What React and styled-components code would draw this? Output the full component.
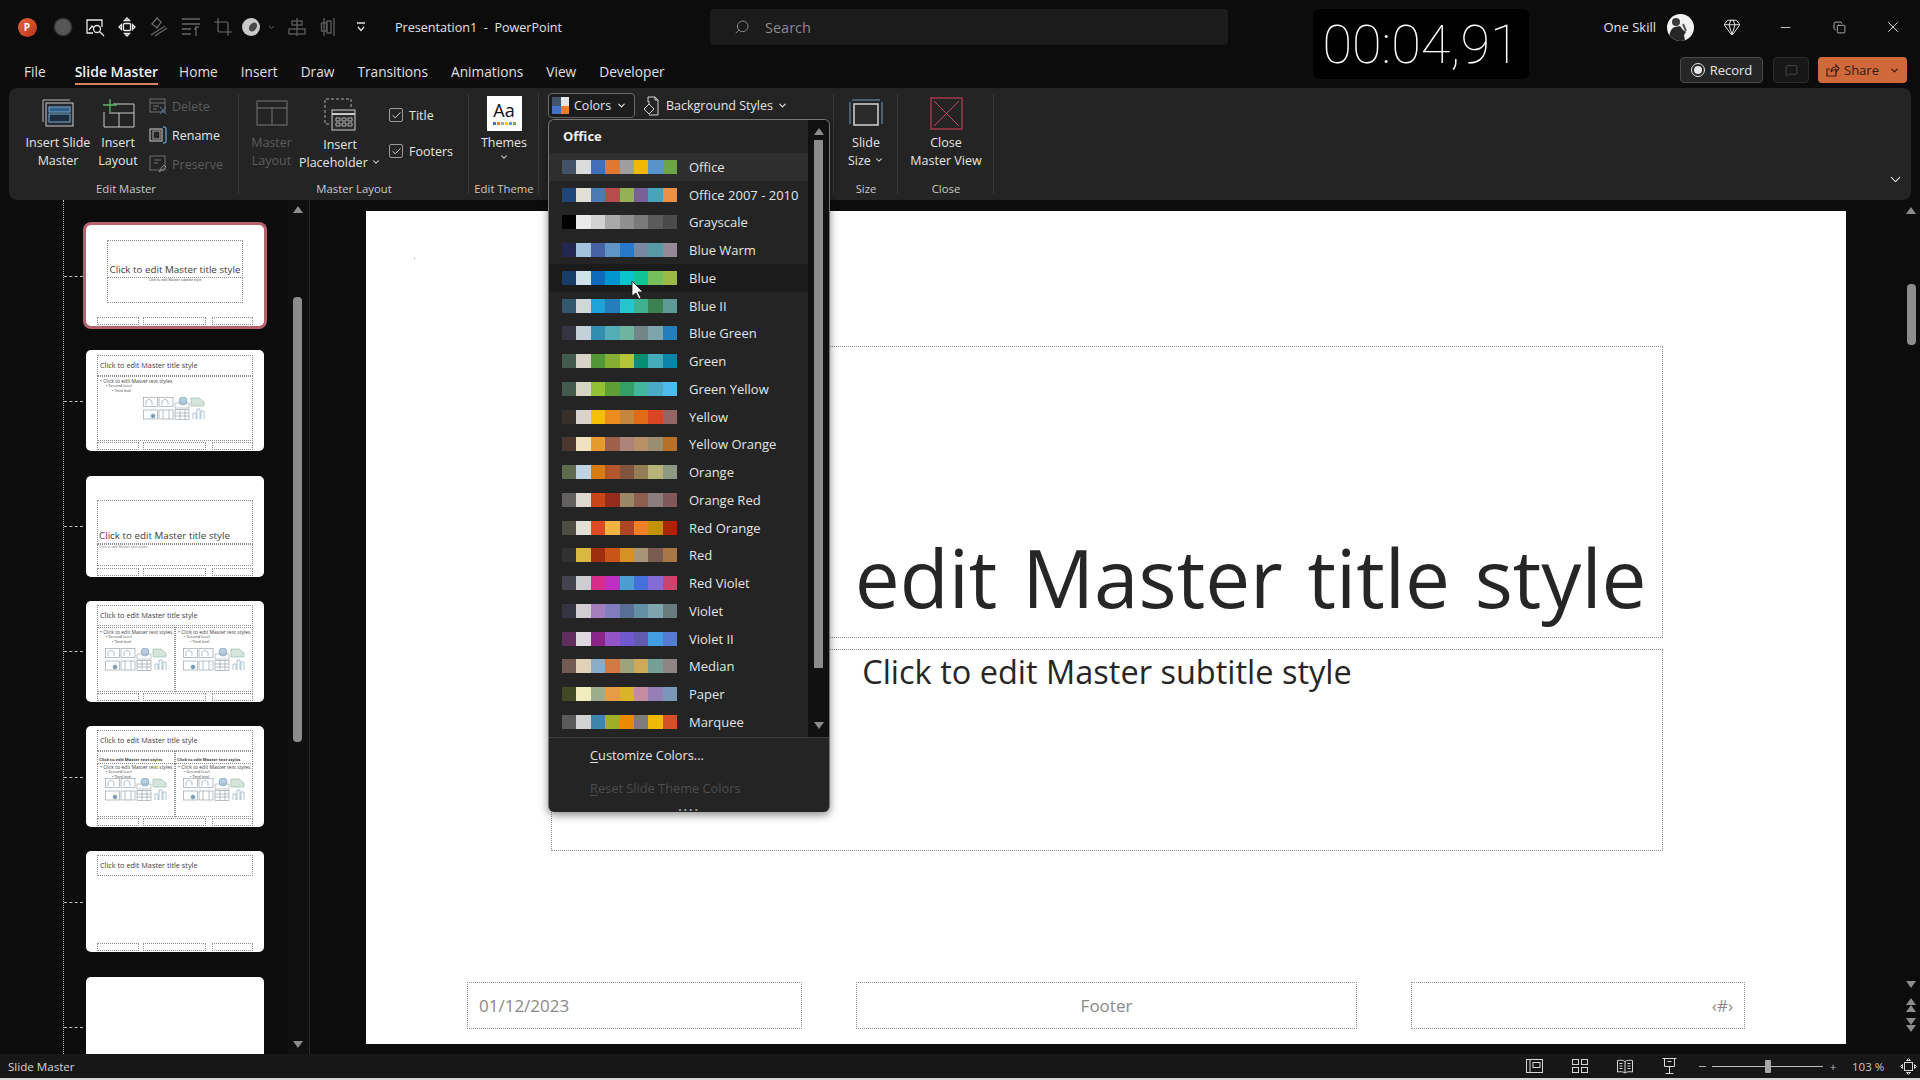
import styled, { createGlobalStyle } from "styled-components";
import { Search, ChevronDown, Minus, X, Gem, Crop, Check, Copy, MessageSquare } from "lucide-react";

const GlobalStyle = createGlobalStyle`
	html, body {
		margin: 0;
		padding: 0;
		width: 1920px;
		height: 1080px;
		overflow: hidden;
		background: #0c0c0c;
		font-family: "Open Sans", "Noto Sans", sans-serif;
		color: #e6e6e6;
	}
	* { box-sizing: border-box; }
`;

const SCHEMES = [
	["Office", "44546a e7e6e6 4472c4 ed7d31 a5a5a5 ffc000 5b9bd5 70ad47"],
	["Office 2007 - 2010", "1f497d eeece1 4f81bd c0504d 9bbb59 8064a2 4bacc6 f79646"],
	["Grayscale", "000000 f8f8f8 dddddd b2b2b2 969696 808080 5f5f5f 4d4d4d"],
	["Blue Warm", "242852 acccea 4a66ac 629dd1 297fd5 7f8fa9 5aa2ae 9d90a0"],
	["Blue", "17406d dbeff9 0f6fc6 009dd9 0bd0d9 10cf9b 7cca62 a5c249"],
	["Blue II", "335b74 dfe3e5 1cade4 2683c6 27ced7 42ba97 3e8853 62a39f"],
	["Blue Green", "373545 cedbe6 3494ba 58b6c0 75bda7 7a8c8e 84acb6 2683c6"],
	["Green", "455f51 e3ded1 549e39 8ab833 c0cf3a 029676 4ab5c4 0989b1"],
	["Green Yellow", "455f51 e2dfcc 99cb38 63a537 37a76f 44c1a3 4eb3cf 51c3f9"],
	["Yellow", "39302a e5dedb ffca08 f8931d ce8d3e ec7016 e64823 9c6a6a"],
	["Yellow Orange", "4e3b30 fbeec9 f0a22e a5644e b58b80 c3986d a19574 c17529"],
	["Orange", "637052 ccddea e48312 bd582c 865640 9b8357 c2bc80 94a088"],
	["Orange Red", "696464 e9e5dc d34817 9b2d1f a28e6a 956251 918485 855d5d"],
	["Red Orange", "505046 eeece1 e84c22 ffbd47 b64926 ff8427 cc9900 b22600"],
	["Red", "323232 e5c243 a5300f d55816 e19825 b19c7d 7f5f52 b27d49"],
	["Red Violet", "454551 d8d9dc e32d91 c830cc 4ea6dc 4775e7 8971e1 d54773"],
	["Violet", "373545 dcd8dc ad84c6 8784c7 5d739a 6997af 84acb6 6f8183"],
	["Violet II", "632e62 eae5eb 92278f 9b57d3 755dd9 665eb8 45a5ed 5982db"],
	["Median", "775f55 ebddc3 94b6d2 dd8047 a5ab81 d8b25c 7ba79d 968c8c"],
	["Paper", "444d26 fefac9 a5b592 f3a447 e7bc29 d092a7 9c85c0 809ec2"],
	["Marquee", "5e5e5e dddddd 418ab3 a6b727 f69200 838383 fec306 df5327"],
];

const TABS = ["Home", "Insert", "Draw", "Transitions", "Animations", "View", "Developer"];
const THEME_DOTS = ["#4472c4", "#ed7d31", "#a5a5a5", "#ffc000", "#5b9bd5", "#70ad47"];

// ---------- drawings ----------

const SlideMasterIcon = () => (
	<svg width="32" height="28" viewBox="0 0 32 28" fill="none">
		<path d="M1 23V1h27" stroke="#b8b8b8" />
		<rect x="4" y="4" width="27" height="23" stroke="#c9c9c9" fill="#262c33" />
		<rect x="7" y="8" width="21" height="5" fill="#2f5f88" stroke="#78a9d0" />
		<rect x="7" y="15" width="21" height="8" fill="#1c2e3e" stroke="#78a9d0" />
	</svg>
);

const LayoutIcon = () => (
	<svg width="34" height="30" viewBox="0 0 34 30" fill="none">
		<path d="M12 6h21v23H3V14" stroke="#c9c9c9" />
		<path d="M8 15h25M18 15v14" stroke="#c9c9c9" />
		<path d="M9 1v13M2 7h14" stroke="#62b36a" strokeWidth="1.3" />
	</svg>
);

const MasterLayoutIcon = () => (
	<svg width="32" height="26" viewBox="0 0 32 26" fill="none" stroke="#767676">
		<rect x="1" y="1" width="30" height="24" />
		<path d="M1 8h30M16 8v17" />
	</svg>
);

const PlaceholderIcon = () => (
	<svg width="32" height="33" viewBox="0 0 32 33" fill="none">
		<path d="M5 26H1V1h26v10" stroke="#a8a8a8" strokeDasharray="3 2" />
		<rect x="8" y="12" width="23" height="20" stroke="#c9c9c9" fill="#2c2c2c" />
		<path d="M8 16h23" stroke="#c9c9c9" strokeWidth="2" />
		<path d="M12 20h4v3h-4zM18 20h4v3h-4zM24 20h4v3h-4zM12 25h4v3h-4zM18 25h4v3h-4zM24 25h4v3h-4z" stroke="#b0b0b0" />
	</svg>
);

const DeleteIcon = () => (
	<svg width="18" height="17" viewBox="0 0 18 17" fill="none" stroke="#6e6e6e">
		<rect x="1" y="1" width="15" height="13" />
		<path d="M1 5h15M4 8h6M4 11h4" />
		<path d="M11 9l6 7M17 9l-6 7" stroke="#5c7e99" />
	</svg>
);

const RenameIcon = () => (
	<svg width="18" height="18" viewBox="0 0 18 18" fill="none">
		<rect x="1" y="3" width="12" height="12" stroke="#d0d0d0" />
		<rect x="4" y="5" width="7" height="8" stroke="#a8a8a8" />
		<path d="M14 1c2 0 3 0 3 2v12c0 2-1 2-3 2" stroke="#5fa4d8" strokeWidth="1.3" />
	</svg>
);

const PreserveIcon = () => (
	<svg width="18" height="18" viewBox="0 0 18 18" fill="none" stroke="#6e6e6e">
		<rect x="1" y="1" width="15" height="14" />
		<path d="M5 5h7M5 8h4" />
		<path d="M10 17l3-5 2-2 2 2-2 2-5 3z" stroke="#8c8c8c" />
	</svg>
);

const BackgroundIcon = () => (
	<svg width="16" height="20" viewBox="0 0 16 20" fill="none" stroke="#d4d4d4">
		<path d="M5 6V1h7l3 3v15H6" />
		<path d="M12 1v3h3" />
		<path d="M1 13l5-5 5 5-5 5-5-5zM6 8V5" />
	</svg>
);

const SlideSizeIcon = () => (
	<svg width="34" height="28" viewBox="0 0 34 28" fill="none">
		<path d="M3 1h28" stroke="#6a9cc5" />
		<path d="M1 3v22M33 3v22" stroke="#6a9cc5" />
		<rect x="5" y="5" width="24" height="21" stroke="#c9c9c9" strokeWidth="1.6" fill="#2a2a2a" />
	</svg>
);

const CloseMasterIcon = () => (
	<svg width="33" height="33" viewBox="0 0 33 33" fill="none">
		<rect x="1" y="1" width="31" height="31" stroke="#a83c52" strokeWidth="1.4" />
		<path d="M4 4l25 25M29 4L4 29" stroke="#bc4a60" />
	</svg>
);

const PictureSearchIcon = () => (
	<svg width="19" height="19" viewBox="0 0 19 19" fill="none" stroke="#e8e8e8" strokeWidth="1.3">
		<path d="M7 15H1V2h15v7" />
		<path d="M3 12l3-4 2 2" />
		<circle cx="11" cy="11" r="3.5" />
		<path d="M13.5 13.5L18 18" />
	</svg>
);

const MoveIcon = () => (
	<svg width="18" height="20" viewBox="0 0 18 20" fill="none" stroke="#e8e8e8" strokeWidth="1.3">
		<rect x="5.5" y="6.5" width="7" height="7" rx="1" />
		<path d="M9 1L6.5 3.5h5L9 1zM9 19l-2.5-2.5h5L9 19zM1 10l2.5-2.5v5L1 10zM17 10l-2.5-2.5v5L17 10z" />
	</svg>
);

const BrushIcon = () => (
	<svg width="20" height="20" viewBox="0 0 20 20" fill="none" stroke="#6a6a6a" strokeWidth="1.3">
		<path d="M8 1L3 7l5 4 4-6-4-4zM2 18l14-9M6 19l12-8" />
	</svg>
);

const ParagraphIcon = () => (
	<svg width="20" height="20" viewBox="0 0 20 20" fill="none" stroke="#666" strokeWidth="1.3">
		<path d="M1 2h18M1 7h18M1 12h9M1 17h9M15 19v-9h3M13 12h2" />
	</svg>
);

const BlobIcon = () => (
	<svg width="20" height="20" viewBox="0 0 20 20">
		<path d="M10 1a9 9 0 1 0 0 18 9 9 0 0 0 0-18z" fill="#c9c9c9" />
		<ellipse cx="12" cy="10" rx="3.5" ry="5" transform="rotate(35 12 10)" fill="#4a4a4a" />
	</svg>
);

const AlignIcon = () => (
	<svg width="18" height="20" viewBox="0 0 18 20" fill="none" stroke="#5e5e5e" strokeWidth="1.3">
		<path d="M9 1v18" />
		<rect x="4" y="4" width="10" height="4" />
		<rect x="1" y="12" width="16" height="5" />
	</svg>
);

const DistributeIcon = () => (
	<svg width="18" height="20" viewBox="0 0 18 20" fill="none" stroke="#5e5e5e" strokeWidth="1.3">
		<path d="M4 1v18M14 1v18" />
		<rect x="1.5" y="6" width="5" height="8" />
		<rect x="7" y="4" width="4" height="12" />
	</svg>
);

const OverflowIcon = () => (
	<svg width="10" height="11" viewBox="0 0 10 11" fill="none" stroke="#e0e0e0" strokeWidth="1.3">
		<path d="M1 1h8M2 5l3 3.5L8 5" />
	</svg>
);

const ShareIcon = () => (
	<svg width="14" height="14" viewBox="0 0 14 14" fill="none" stroke="#3b2016" strokeWidth="1.2">
		<path d="M10 7v6H1V6h3" />
		<path d="M5 9c0-3 2-5 5-5V2l3 3.5L10 9V6.5C8 6.5 6 7 5 9z" />
	</svg>
);

const AvatarPhoto = () => (
	<svg width="27" height="27" viewBox="0 0 27 27">
		<rect width="27" height="27" fill="#f2f2f2" />
		<circle cx="9" cy="8" r="4" fill="#3a3a3a" />
		<path d="M2 27c0-8 2-13 6-14l5-1 3 4 3 2-2 3 1 6z" fill="#262626" />
		<path d="M16 10l3 7" stroke="#555" strokeWidth="2" />
	</svg>
);

const NormalViewIcon = () => (
	<svg width="17" height="14" viewBox="0 0 17 14" fill="none" stroke="#d8d8d8">
		<rect x="0.5" y="0.5" width="16" height="13" />
		<path d="M4 .5v13" />
		<rect x="7" y="3.5" width="7" height="5" />
	</svg>
);

const SorterIcon = () => (
	<svg width="16" height="14" viewBox="0 0 16 14" fill="none" stroke="#d8d8d8">
		<rect x="0.5" y="0.5" width="6" height="5" />
		<rect x="9.5" y="0.5" width="6" height="5" />
		<rect x="0.5" y="8.5" width="6" height="5" />
		<rect x="9.5" y="8.5" width="6" height="5" />
	</svg>
);

const ReadingIcon = () => (
	<svg width="16" height="15" viewBox="0 0 16 15" fill="none" stroke="#d8d8d8">
		<path d="M8 2.5C6 1 3 1 .5 1.500V13C3 12.500 6 12.500 8 14c2-1.500 5-1.500 7.500-1V1.500C13 1 10 1 8 2.500zM8 2.500V14M2.500 4.500h3M2.500 7h3M2.500 9.500h3M10.500 4.500h3M10.500 7h3M10.500 9.500h3" />
	</svg>
);

const ShowIcon = () => (
	<svg width="15" height="16" viewBox="0 0 15 16" fill="none" stroke="#d8d8d8">
		<path d="M.5.500h14M2.500.500v8h10v-8M7.500 8.500V15M3.500 15.500h8M5.500 3.500h4" />
	</svg>
);

const FitIcon = () => (
	<svg width="17" height="17" viewBox="0 0 17 17" fill="none" stroke="#d8d8d8">
		<rect x="4.500" y="4.500" width="8" height="8" />
		<path d="M8.500.5L6.500 2.500h4L8.500.5zM8.500 16.500l-2-2h4l-2 2zM.5 8.500l2-2v4l-2-2zM16.500 8.500l-2-2v4l2-2z" />
	</svg>
);

const ContentIcons = () => (
	<svg width="62" height="23" viewBox="0 0 62 23" fill="none" stroke="#8b96a0" strokeWidth="0.6">
		<rect x="0.5" y="0.5" width="14" height="9" />
		<path d="M3 8V4l3-2 3 2v4" />
		<rect x="16" y="0.5" width="14" height="9" />
		<path d="M19 8V4l3-2 3 2v4" />
		<circle cx="40" cy="4" r="4" stroke="#6f9dc4" fill="#b7cde0" />
		<path d="M32 6h14v5H32z" stroke="#9aa6b0" />
		<path d="M48 1h8l5 4v4H48z" stroke="#8fb5a2" fill="#d5e5dc" />
		<rect x="0.5" y="13" width="14" height="9" />
		<circle cx="10" cy="19" r="2" fill="#6f9dc4" />
		<rect x="16" y="13" width="14" height="9" />
		<path d="M20 13v9M26 13v9" />
		<rect x="32" y="12.500" width="14" height="10" />
		<path d="M32 16h14M32 19h14M37 12.500v10M42 12.500v10" />
		<path d="M50 22v-6h3v6M54 22V12h3v10M58 22v-8h3v8" stroke="#7b9fbd" />
	</svg>
);

// ---------- page frame ----------

const Page = styled.div`
	position: relative;
	width: 1920px;
	height: 1080px;
	display: flex;
	flex-direction: column;
	background: #0c0c0c;
	overflow: hidden;
`;

const TitleBar = styled.div`
	height: 56px;
	flex: none;
	display: flex;
	align-items: center;
	padding: 0 0 2px 12px;
`;

const QuickSlot = styled.div`
	width: ${(p) => p.$w || 32}px;
	margin-left: ${(p) => p.$ml || 0}px;
	height: 30px;
	display: flex;
	align-items: center;
	justify-content: center;
	color: ${(p) => p.$color || "#e8e8e8"};
`;

const AppLogo = styled.div`
	width: 19px;
	height: 19px;
	border-radius: 50%;
	background: linear-gradient(135deg, #e8653a, #b9341a);
	display: flex;
	align-items: center;
	justify-content: center;
	font-size: 10px;
	font-weight: 700;
	color: #fff;
`;

const RecordDot = styled.div`
	width: 16px;
	height: 16px;
	border-radius: 50%;
	background: #565656;
	box-shadow: 0 0 0 1.5px #2e2e2e;
`;

const WindowTitle = styled.div`
	width: 315px;
	margin-left: 18px;
	font-size: 12.6px;
	white-space: pre;
	color: #e2e2e2;
`;

const SearchBox = styled.div`
	width: 518px;
	height: 36px;
	background: #1b1b1b;
	border-radius: 4px;
	display: flex;
	align-items: center;
	padding-left: 24px;
	gap: 15px;
	font-size: 14.5px;
	color: #8a8a8a;
	svg { transform: scaleX(-1); }
`;

const TitleRight = styled.div`
	margin-left: auto;
	display: flex;
	align-items: center;
`;

const UserName = styled.div`
	font-size: 13px;
	margin-right: 11px;
	color: #e2e2e2;
`;

const Avatar = styled.div`
	width: 27px;
	height: 27px;
	border-radius: 50%;
	overflow: hidden;
	margin-right: 23px;
`;

const PremiumSlot = styled.div`
	width: 30px;
	margin-right: 11px;
	display: flex;
	justify-content: center;
`;

const WindowButton = styled.div`
	width: 54px;
	height: 30px;
	display: flex;
	align-items: center;
	justify-content: center;
	color: #e8e8e8;
`;

const Timer = styled.div`
	position: absolute;
	left: 1313px;
	top: 9px;
	width: 216px;
	height: 70px;
	background: #000;
	border-radius: 6px;
	display: flex;
	align-items: center;
	justify-content: center;
	font-family: Roboto, sans-serif;
	font-weight: 100;
	font-size: 54px;
	color: #fff;
`;

const TabRow = styled.div`
	height: 32px;
	flex: none;
	display: flex;
	align-items: center;
	padding: 0 13px 0 24px;
`;

const Tab = styled.div`
	position: relative;
	margin-right: ${(p) => p.$mr || 23}px;
	font-size: ${(p) => (p.$active ? 14 : 13.7)}px;
	line-height: 32px;
	font-weight: ${(p) => (p.$active ? 600 : 400)};
	color: ${(p) => (p.$active ? "#f2f2f2" : "#e0e0e0")};
	&::after {
		content: "";
		display: ${(p) => (p.$active ? "block" : "none")};
		position: absolute;
		left: 0;
		right: 0;
		bottom: 3px;
		height: 2px;
		background: #d9825f;
	}
`;

const TabActions = styled.div`
	margin-left: auto;
	margin-bottom: 4px;
	display: flex;
	align-items: center;
`;

const RecordButton = styled.div`
	width: 83px;
	height: 26px;
	border: 1px solid #4a4a4a;
	border-radius: 4px;
	background: #262626;
	display: flex;
	align-items: center;
	justify-content: center;
	gap: 5px;
	font-size: 13px;
	color: #e6e6e6;
`;

const RecordGlyph = styled.span`
	width: 14px;
	height: 14px;
	border-radius: 50%;
	border: 1px solid #e6e6e6;
	display: flex;
	align-items: center;
	justify-content: center;
	&::after {
		content: "";
		width: 8px;
		height: 8px;
		border-radius: 50%;
		background: #e6e6e6;
	}
`;

const CommentButton = styled.div`
	width: 36px;
	height: 26px;
	margin-left: 10px;
	border: 1px solid #2b2b2b;
	border-radius: 4px;
	background: #171717;
	display: flex;
	align-items: center;
	justify-content: center;
	color: #5c5c5c;
`;

const ShareButton = styled.div`
	width: 89px;
	height: 26px;
	margin-left: 9px;
	border-radius: 4px;
	background: #d0683a;
	display: flex;
	align-items: center;
	padding-left: 8px;
	gap: 4px;
	font-size: 13px;
	color: #2e1a12;
	svg:last-child { margin-left: 6px; }
`;

// ---------- ribbon ----------

const Ribbon = styled.div`
	height: 112px;
	flex: none;
	margin: 0 9px;
	background: #242424;
	border-radius: 8px;
	display: flex;
`;

const Group = styled.div`
	position: relative;
	width: ${(p) => p.$w}px;
	display: flex;
	flex-direction: column;
	&::after {
		content: "";
		position: absolute;
		right: 0;
		top: 6px;
		bottom: 6px;
		width: 1px;
		background: #383838;
	}
`;

const GroupBody = styled.div`
	height: 93px;
	padding-top: 4px;
	display: flex;
	justify-content: ${(p) => (p.$center ? "center" : "flex-start")};
`;

const GroupLabel = styled.div`
	font-size: 11.3px;
	line-height: 16px;
	text-align: center;
	color: #c8c8c8;
	padding-left: ${(p) => p.$pl || 0}px;
`;

const BigButton = styled.div`
	width: ${(p) => p.$w}px;
	margin-left: ${(p) => p.$ml || 0}px;
	display: flex;
	flex-direction: column;
	align-items: center;
	font-size: 12.5px;
	line-height: 18px;
	text-align: center;
	white-space: nowrap;
	color: ${(p) => (p.$off ? "#5c5c5c" : "#e4e4e4")};
`;

const IconArea = styled.div`
	height: ${(p) => p.$h || 42}px;
	display: flex;
	align-items: center;
	justify-content: center;
`;

const SmallColumn = styled.div`
	margin-left: ${(p) => p.$ml || 0}px;
	display: flex;
	flex-direction: column;
	gap: 9px;
	padding-top: 4px;
`;

const SmallButton = styled.div`
	height: 20px;
	display: flex;
	align-items: center;
	gap: 5px;
	font-size: 12.5px;
	color: ${(p) => (p.$off ? "#5c5c5c" : "#e4e4e4")};
`;

const CheckColumn = styled.div`
	margin-left: ${(p) => p.$ml || 0}px;
	display: flex;
	flex-direction: column;
	gap: 20px;
	padding-top: 15px;
`;

const CheckRow = styled.label`
	height: 16px;
	display: flex;
	align-items: center;
	gap: 6px;
	font-size: 12.5px;
	color: #e4e4e4;
`;

const CheckBox = styled.span`
	width: 14px;
	height: 14px;
	border: 1px solid #9a9a9a;
	border-radius: 2px;
	display: flex;
	align-items: center;
	justify-content: center;
`;

const ThemeCard = styled.div`
	width: 35px;
	height: 35px;
	background: #fff;
	color: #111;
	display: flex;
	flex-direction: column;
	align-items: center;
	font-size: 18px;
	line-height: 24px;
	padding-top: 2px;
`;

const ThemeDots = styled.div`
	display: flex;
	gap: 1px;
`;

const ThemeDot = styled.span`
	width: 3px;
	height: 3px;
	background: ${(p) => p.$color};
`;

const ColorsButton = styled.div`
	width: 87px;
	height: 25px;
	margin: 1px 8px 0 9px;
	border: 1px solid #6a6a6a;
	border-radius: 4px;
	background: #1c1c1c;
	display: flex;
	align-items: center;
	padding-left: 3px;
	gap: 5px;
	font-size: 12.5px;
	color: #e4e4e4;
`;

const ColorsGlyph = styled.div`
	width: 17px;
	height: 17px;
	display: grid;
	grid-template-columns: 1fr 1fr;
	grid-template-rows: 1fr 1fr;
	span:nth-child(1) { background: #44546a; }
	span:nth-child(2) { background: #e7e6e6; }
	span:nth-child(3) { background: #4472c4; }
	span:nth-child(4) { background: #ed7d31; }
`;

const BackgroundButton = styled.div`
	height: 25px;
	margin-top: 1px;
	display: flex;
	align-items: center;
	gap: 7px;
	font-size: 12.5px;
	color: #e4e4e4;
	svg:last-child { margin-left: -3px; }
`;

const CollapseSlot = styled.div`
	margin-left: auto;
	align-self: flex-end;
	padding: 0 7px 7px 0;
	color: #e0e0e0;
`;

// ---------- theme colours menu ----------

const Menu = styled.div`
	position: absolute;
	left: 548px;
	top: 119px;
	width: 282px;
	height: 693px;
	background: #242424;
	border: 1px solid #777;
	border-width: 1px 1px 0 1px;
	border-radius: 6px;
	box-shadow: 0 3px 8px rgba(0, 0, 0, 0.45);
	display: flex;
	flex-direction: column;
	overflow: hidden;
`;

const MenuTop = styled.div`
	height: 617px;
	flex: none;
	display: flex;
`;

const MenuList = styled.div`
	width: 259px;
`;

const MenuHeader = styled.div`
	height: 33px;
	padding: 7px 0 0 14px;
	font-size: 13px;
	font-weight: 700;
	color: #f0f0f0;
`;

const SchemeRow = styled.div`
	height: 27.75px;
	display: flex;
	align-items: center;
	padding-left: 13px;
	font-size: 13px;
	color: #e4e4e4;
	background: ${(p) => (p.$state === "first" ? "#2e2e2e" : p.$state === "hover" ? "#1b1b1b" : "transparent")};
`;

const Swatches = styled.div`
	width: 115px;
	height: 14px;
	margin-right: 12px;
	flex: none;
	display: flex;
	opacity: 0.94;
`;

const Swatch = styled.span`
	flex: 1;
	background: ${(p) => p.$color};
`;

const ScrollTrack = styled.div`
	flex: 1;
	background: #111;
	display: flex;
	flex-direction: column;
	align-items: center;
	padding: 8px 0 8px;
`;

const ScrollThumb = styled.div`
	width: ${(p) => p.$w || 9}px;
	height: ${(p) => p.$h}px;
	margin-top: ${(p) => p.$mt}px;
	background: #8c8c8c;
	border-radius: ${(p) => p.$r || 0}px;
`;

const Arrow = styled.span`
	display: block;
	flex: none;
	width: 0;
	height: 0;
	border-left: 5px solid transparent;
	border-right: 5px solid transparent;
	border-${(p) => (p.$down ? "top" : "bottom")}: 7px solid #8c8c8c;
	margin-top: ${(p) => (p.$auto ? "auto" : `${p.$mt || 0}px`)};
`;

const MenuFooter = styled.div`
	flex: 1;
	border-top: 1px solid #3e3e3e;
	display: flex;
	flex-direction: column;
`;

const MenuCommand = styled.div`
	height: 33px;
	padding-left: 41px;
	display: flex;
	align-items: center;
	font-size: 12.8px;
	color: ${(p) => (p.$off ? "#4c4c4c" : "#e4e4e4")};
	u { text-underline-offset: 2px; }
`;

const Grip = styled.div`
	text-align: center;
	font-size: 12px;
	font-weight: 700;
	line-height: 6px;
	letter-spacing: 2px;
	color: #a8a8a8;
`;

const Pointer = styled.svg`
	position: absolute;
	left: 631px;
	top: 280px;
`;

// ---------- workspace ----------

const Workspace = styled.div`
	flex: 1;
	min-height: 0;
	display: flex;
`;

const ThumbPane = styled.div`
	width: 310px;
	flex: none;
	display: flex;
	border-right: 1px solid #2a2a2a;
`;

const ThumbList = styled.div`
	flex: 1;
	margin-left: 63px;
	padding: 25px 0 0 22px;
	border-left: 1px dotted #bdbdbd;
	display: flex;
	flex-direction: column;
	gap: 24.3px;
	overflow: hidden;
`;

const ThumbWrap = styled.div`
	position: relative;
	width: 178px;
	height: 101px;
	flex: none;
	&::before {
		content: "";
		position: absolute;
		left: -22px;
		top: 50%;
		width: 19px;
		border-top: 1px dashed #bdbdbd;
	}
`;

const ThumbSlide = styled.div`
	position: relative;
	width: 100%;
	height: 100%;
	background: #fff;
	border-radius: 5px;
	overflow: hidden;
	box-shadow: ${(p) => (p.$selected ? "0 0 0 3px #b8626f" : "none")};
`;

const PaneScroll = styled.div`
	width: 21px;
	flex: none;
	padding: 6px 2px 6px 0;
	display: flex;
	flex-direction: column;
	align-items: center;
	background: #101010;
`;

// a box on a slide, so it sits by slide coordinates
const Box = styled.div`
	position: absolute;
	left: ${(p) => p.$l}px;
	top: ${(p) => p.$t}px;
	width: ${(p) => p.$w}px;
	height: ${(p) => p.$h}px;
	border: 1px dotted #8f8f8f;
`;

const ThumbText = styled.div`
	position: absolute;
	left: ${(p) => p.$l}px;
	top: ${(p) => p.$t}px;
	width: ${(p) => p.$w || "auto"};
	font-size: ${(p) => p.$s}px;
	line-height: 1.2;
	font-weight: ${(p) => p.$b || 400};
	text-align: ${(p) => p.$align || "left"};
	white-space: nowrap;
	color: ${(p) => p.$c || "#404040"};
`;

const ThumbIcons = styled.div`
	position: absolute;
	left: ${(p) => p.$l}px;
	top: ${(p) => p.$t}px;
	line-height: 0;
`;

const Canvas = styled.div`
	flex: 1;
	display: flex;
	padding: 11px 0 0 56px;
	background: #0c0c0c;
`;

const Slide = styled.div`
	position: relative;
	width: 1480px;
	height: 833px;
	background: #fff;
	flex: none;
`;

const SlideText = styled.div`
	position: absolute;
	left: ${(p) => p.$l}px;
	top: ${(p) => p.$t}px;
	width: ${(p) => p.$w}px;
	font-size: ${(p) => p.$s}px;
	line-height: 1.2;
	word-spacing: ${(p) => p.$ws || 0}px;
	text-align: ${(p) => p.$align || "center"};
	white-space: nowrap;
	color: ${(p) => p.$c || "#262626"};
`;

const SlideDot = styled.span`
	position: absolute;
	left: 48px;
	top: 47px;
	width: 1px;
	height: 1px;
	background: #999;
`;

const CanvasScroll = styled.div`
	width: 18px;
	margin: -7px 0 0 auto;
	padding: 3px 0 22px;
	display: flex;
	flex-direction: column;
	align-items: center;
`;

const StatusBar = styled.div`
	height: 24px;
	flex: none;
	background: #171717;
	display: flex;
	align-items: center;
	padding-left: 8px;
	font-size: 11.6px;
	color: #d4d4d4;
`;

const StatusRight = styled.div`
	margin-left: auto;
	display: flex;
	align-items: center;
`;

const ViewSlot = styled.div`
	width: ${(p) => p.$w || 45}px;
	display: flex;
	justify-content: center;
	color: #bdbdbd;
`;

const ZoomTrack = styled.div`
	position: relative;
	width: 111px;
	height: 1px;
	background: #bdbdbd;
`;

const ZoomKnob = styled.span`
	position: absolute;
	left: 53px;
	top: -6px;
	width: 6px;
	height: 13px;
	background: #a8a8a8;
	border-radius: 1px;
`;

const ZoomValue = styled.div`
	width: 44px;
	margin-left: 9px;
	white-space: nowrap;
	font-size: 11.5px;
	color: #c8c8c8;
`;

const BottomEdge = styled.div`
	height: 2px;
	flex: none;
	background: #d8d8d8;
`;

// ---------- small parts ----------

const BodyLevels = ({ l, t }) => (
	<>
		<ThumbText $l={l} $t={t} $s={5}>• Click to edit Master text styles</ThumbText>
		<ThumbText $l={l + 6} $t={t + 6} $s={4}>• Second level</ThumbText>
		<ThumbText $l={l + 12} $t={t + 11} $s={3.5}>• Third level</ThumbText>
	</>
);

const ThumbFooters = () => (
	<>
		<Box $l={11} $t={92} $w={42} $h={8} />
		<Box $l={57} $t={92} $w={63} $h={8} />
		<Box $l={126} $t={92} $w={41} $h={8} />
	</>
);

const Thumb = ({ kind, selected }) => (
	<ThumbWrap>
		<ThumbSlide $selected={selected}>
			{kind === "title" && (
				<>
					<Box $l={21} $t={15} $w={136} $h={38} />
					<Box $l={21} $t={52} $w={136} $h={26} />
					<ThumbText $l={21} $t={39} $w="136px" $align="center" $s={9.8}>Click to edit Master title style</ThumbText>
					<ThumbText $l={21} $t={53} $w="136px" $align="center" $s={3.5}>Click to edit Master subtitle style</ThumbText>
					<ThumbFooters />
				</>
			)}
			{kind === "content" && (
				<>
					<Box $l={11} $t={5} $w={156} $h={21} />
					<Box $l={11} $t={26} $w={156} $h={65} />
					<ThumbText $l={14} $t={11} $s={7.3}>Click to edit Master title style</ThumbText>
					<BodyLevels l={14} t={28} />
					<ThumbIcons $l={57} $t={47}><ContentIcons /></ThumbIcons>
					<ThumbFooters />
				</>
			)}
			{kind === "section" && (
				<>
					<Box $l={11} $t={24} $w={156} $h={44} />
					<Box $l={11} $t={68} $w={156} $h={22} />
					<ThumbText $l={13} $t={54} $s={9.8}>Click to edit Master title style</ThumbText>
					<ThumbText $l={13} $t={69} $s={3.5} $c="#777">Click to edit Master text styles</ThumbText>
					<ThumbFooters />
				</>
			)}
			{kind === "two" && (
				<>
					<Box $l={11} $t={4} $w={156} $h={21} />
					<Box $l={11} $t={26} $w={78} $h={65} />
					<Box $l={89} $t={26} $w={78} $h={65} />
					<ThumbText $l={14} $t={10} $s={7.3}>Click to edit Master title style</ThumbText>
					<BodyLevels l={14} t={28} />
					<BodyLevels l={92} t={28} />
					<ThumbIcons $l={19} $t={47}><ContentIcons /></ThumbIcons>
					<ThumbIcons $l={97} $t={47}><ContentIcons /></ThumbIcons>
					<ThumbFooters />
				</>
			)}
			{kind === "compare" && (
				<>
					<Box $l={11} $t={4} $w={156} $h={21} />
					<Box $l={11} $t={25} $w={78} $h={13} />
					<Box $l={89} $t={25} $w={78} $h={13} />
					<Box $l={11} $t={37} $w={78} $h={54} />
					<Box $l={89} $t={37} $w={78} $h={54} />
					<ThumbText $l={14} $t={10} $s={7.3}>Click to edit Master title style</ThumbText>
					<ThumbText $l={13} $t={31} $s={4.2} $b={700}>Click to edit Master text styles</ThumbText>
					<ThumbText $l={91} $t={31} $s={4.2} $b={700}>Click to edit Master text styles</ThumbText>
					<BodyLevels l={14} t={38} />
					<BodyLevels l={92} t={38} />
					<ThumbIcons $l={19} $t={52}><ContentIcons /></ThumbIcons>
					<ThumbIcons $l={97} $t={52}><ContentIcons /></ThumbIcons>
					<ThumbFooters />
				</>
			)}
			{kind === "titleonly" && (
				<>
					<Box $l={11} $t={4} $w={156} $h={21} />
					<ThumbText $l={14} $t={10} $s={7.3}>Click to edit Master title style</ThumbText>
					<ThumbFooters />
				</>
			)}
		</ThumbSlide>
	</ThumbWrap>
);

const ChevronSmall = ({ size = 11, color = "#e4e4e4" }) => <ChevronDown size={size} color={color} strokeWidth={2.5} />;

const App = () => {
	return (
		<Page>
			<GlobalStyle />

			<TitleBar>
				<QuickSlot $w={30}><AppLogo>P</AppLogo></QuickSlot>
				<QuickSlot $ml={5}><RecordDot /></QuickSlot>
				<QuickSlot><PictureSearchIcon /></QuickSlot>
				<QuickSlot><MoveIcon /></QuickSlot>
				<QuickSlot><BrushIcon /></QuickSlot>
				<QuickSlot><ParagraphIcon /></QuickSlot>
				<QuickSlot><Crop size={20} color="#6a6a6a" strokeWidth={1.4} /></QuickSlot>
				<QuickSlot $w={24}><BlobIcon /></QuickSlot>
				<QuickSlot $w={16}><ChevronSmall size={9} color="#6a6a6a" /></QuickSlot>
				<QuickSlot $ml={2}><AlignIcon /></QuickSlot>
				<QuickSlot><DistributeIcon /></QuickSlot>
				<QuickSlot><OverflowIcon /></QuickSlot>
				<WindowTitle>Presentation1  -  PowerPoint</WindowTitle>
				<SearchBox>
					<Search size={16} color="#8a8a8a" strokeWidth={1.5} />
					Search
				</SearchBox>
				<TitleRight>
					<UserName>One Skill</UserName>
					<Avatar><AvatarPhoto /></Avatar>
					<PremiumSlot><Gem size={18} color="#e8e8e8" strokeWidth={1.3} /></PremiumSlot>
					<WindowButton><Minus size={15} strokeWidth={1.3} /></WindowButton>
					<WindowButton><Copy size={13} strokeWidth={1.3} /></WindowButton>
					<WindowButton><X size={18} strokeWidth={1.2} /></WindowButton>
				</TitleRight>
			</TitleBar>

			<Timer>00:04,91</Timer>

			<TabRow>
				<Tab $mr={29}>File</Tab>
				<Tab $active $mr={21}>Slide Master</Tab>
				{TABS.map((t) => <Tab key={t}>{t}</Tab>)}
				<TabActions>
					<RecordButton><RecordGlyph />Record</RecordButton>
					<CommentButton><MessageSquare size={13} strokeWidth={1.3} /></CommentButton>
					<ShareButton><ShareIcon />Share<ChevronSmall size={11} color="#2e1a12" /></ShareButton>
				</TabActions>
			</TabRow>

			<Ribbon>
				<Group $w={230}>
					<GroupBody>
						<BigButton $w={68} $ml={15}>
							<IconArea><SlideMasterIcon /></IconArea>
							Insert Slide<br />Master
						</BigButton>
						<BigButton $w={40} $ml={6}>
							<IconArea><LayoutIcon /></IconArea>
							Insert<br />Layout
						</BigButton>
						<SmallColumn $ml={11}>
							<SmallButton $off><DeleteIcon />Delete</SmallButton>
							<SmallButton><RenameIcon />Rename</SmallButton>
							<SmallButton $off><PreserveIcon />Preserve</SmallButton>
						</SmallColumn>
					</GroupBody>
					<GroupLabel $pl={4}>Edit Master</GroupLabel>
				</Group>

				<Group $w={230}>
					<GroupBody>
						<BigButton $w={39} $off $ml={13}>
							<IconArea><MasterLayoutIcon /></IconArea>
							Master<br />Layout
						</BigButton>
						<BigButton $w={80} $ml={9}>
							<IconArea $h={44}><PlaceholderIcon /></IconArea>
							Insert<br />
							<span>Placeholder <ChevronSmall size={10} /></span>
						</BigButton>
						<CheckColumn $ml={9}>
							<CheckRow><CheckBox><Check size={11} color="#e4e4e4" /></CheckBox>Title</CheckRow>
							<CheckRow><CheckBox><Check size={11} color="#e4e4e4" /></CheckBox>Footers</CheckRow>
						</CheckColumn>
					</GroupBody>
					<GroupLabel>Master Layout</GroupLabel>
				</Group>

				<Group $w={70}>
					<GroupBody $center>
						<BigButton $w={60}>
							<IconArea>
								<ThemeCard>
									Aa
									<ThemeDots>
										{THEME_DOTS.map((c) => <ThemeDot key={c} $color={c} />)}
									</ThemeDots>
								</ThemeCard>
							</IconArea>
							Themes
							<ChevronSmall size={10} />
						</BigButton>
					</GroupBody>
					<GroupLabel>Edit Theme</GroupLabel>
				</Group>

				<Group $w={295}>
					<GroupBody>
						<ColorsButton>
							<ColorsGlyph><span /><span /><span /><span /></ColorsGlyph>
							Colors <ChevronSmall size={11} />
						</ColorsButton>
						<BackgroundButton>
							<BackgroundIcon />
							Background Styles <ChevronSmall size={11} />
						</BackgroundButton>
					</GroupBody>
				</Group>

				<Group $w={64}>
					<GroupBody $center>
						<BigButton $w={50}>
							<IconArea><SlideSizeIcon /></IconArea>
							Slide<br />
							<span>Size <ChevronSmall size={10} /></span>
						</BigButton>
					</GroupBody>
					<GroupLabel>Size</GroupLabel>
				</Group>

				<Group $w={96}>
					<GroupBody $center>
						<BigButton $w={80}>
							<IconArea><CloseMasterIcon /></IconArea>
							Close<br />Master View
						</BigButton>
					</GroupBody>
					<GroupLabel>Close</GroupLabel>
				</Group>

				<CollapseSlot><ChevronDown size={17} strokeWidth={1.5} /></CollapseSlot>
			</Ribbon>

			<Workspace>
				<ThumbPane>
					<ThumbList>
						<Thumb kind="title" selected />
						<Thumb kind="content" />
						<Thumb kind="section" />
						<Thumb kind="two" />
						<Thumb kind="compare" />
						<Thumb kind="titleonly" />
						<Thumb kind="blank" />
					</ThumbList>
					<PaneScroll>
						<Arrow />
						<ScrollThumb $w={9} $h={445} $mt={84} $r={4} />
						<Arrow $down $auto />
					</PaneScroll>
				</ThumbPane>

				<Canvas>
					<Slide>
						<SlideDot />
						<Box $l={185} $t={135} $w={1112} $h={292} />
						<Box $l={185} $t={438} $w={1112} $h={202} />
						<SlideText $l={180} $t={318} $w={1112} $s={80} $ws={4}>Click to edit Master title style</SlideText>
						<SlideText $l={185} $t={441} $w={1112} $s={32.5}>Click to edit Master subtitle style</SlideText>
						<Box $l={101} $t={771} $w={335} $h={47} />
						<Box $l={490} $t={771} $w={501} $h={47} />
						<Box $l={1045} $t={771} $w={334} $h={47} />
						<SlideText $l={113} $t={785} $w={320} $s={17} $align="left" $c="#898989">01/12/2023</SlideText>
						<SlideText $l={490} $t={785} $w={501} $s={17} $c="#898989">Footer</SlideText>
						<SlideText $l={1045} $t={785} $w={322} $s={17} $align="right" $c="#898989">‹#›</SlideText>
					</Slide>
					<CanvasScroll>
						<Arrow />
						<ScrollThumb $w={9} $h={61} $mt={70} $r={4} />
						<Arrow $down $auto />
						<Arrow $mt={10} />
						<Arrow />
						<Arrow $down $mt={6} />
						<Arrow $down />
					</CanvasScroll>
				</Canvas>
			</Workspace>

			<StatusBar>
				Slide Master
				<StatusRight>
					<ViewSlot><NormalViewIcon /></ViewSlot>
					<ViewSlot><SorterIcon /></ViewSlot>
					<ViewSlot><ReadingIcon /></ViewSlot>
					<ViewSlot><ShowIcon /></ViewSlot>
					<ViewSlot $w={20}><Minus size={11} /></ViewSlot>
					<ZoomTrack><ZoomKnob /></ZoomTrack>
					<ViewSlot $w={20}>+</ViewSlot>
					<ZoomValue>103 %</ZoomValue>
					<ViewSlot $w={24}><FitIcon /></ViewSlot>
				</StatusRight>
			</StatusBar>
			<BottomEdge />

			<Menu>
				<MenuTop>
					<MenuList>
						<MenuHeader>Office</MenuHeader>
						{SCHEMES.map(([name, colors]) => (
							<SchemeRow key={name} $state={name === "Office" ? "first" : name === "Blue" ? "hover" : ""}>
								<Swatches>
									{colors.split(" ").map((c, i) => <Swatch key={i} $color={`#${c}`} />)}
								</Swatches>
								{name}
							</SchemeRow>
						))}
					</MenuList>
					<ScrollTrack>
						<Arrow />
						<ScrollThumb $w={9} $h={528} $mt={5} />
						<Arrow $down $auto />
					</ScrollTrack>
				</MenuTop>
				<MenuFooter>
					<MenuCommand><span><u>C</u>ustomize Colors...</span></MenuCommand>
					<MenuCommand $off><span><u>R</u>eset Slide Theme Colors</span></MenuCommand>
					<Grip>....</Grip>
				</MenuFooter>
			</Menu>

			<Pointer width="14" height="20" viewBox="0 0 14 20">
				<path d="M1 1v15l4-3 3 6 2-1-3-6h5z" fill="#fff" stroke="#111" strokeWidth="0.8" />
			</Pointer>
		</Page>
	);
};

export default App;
